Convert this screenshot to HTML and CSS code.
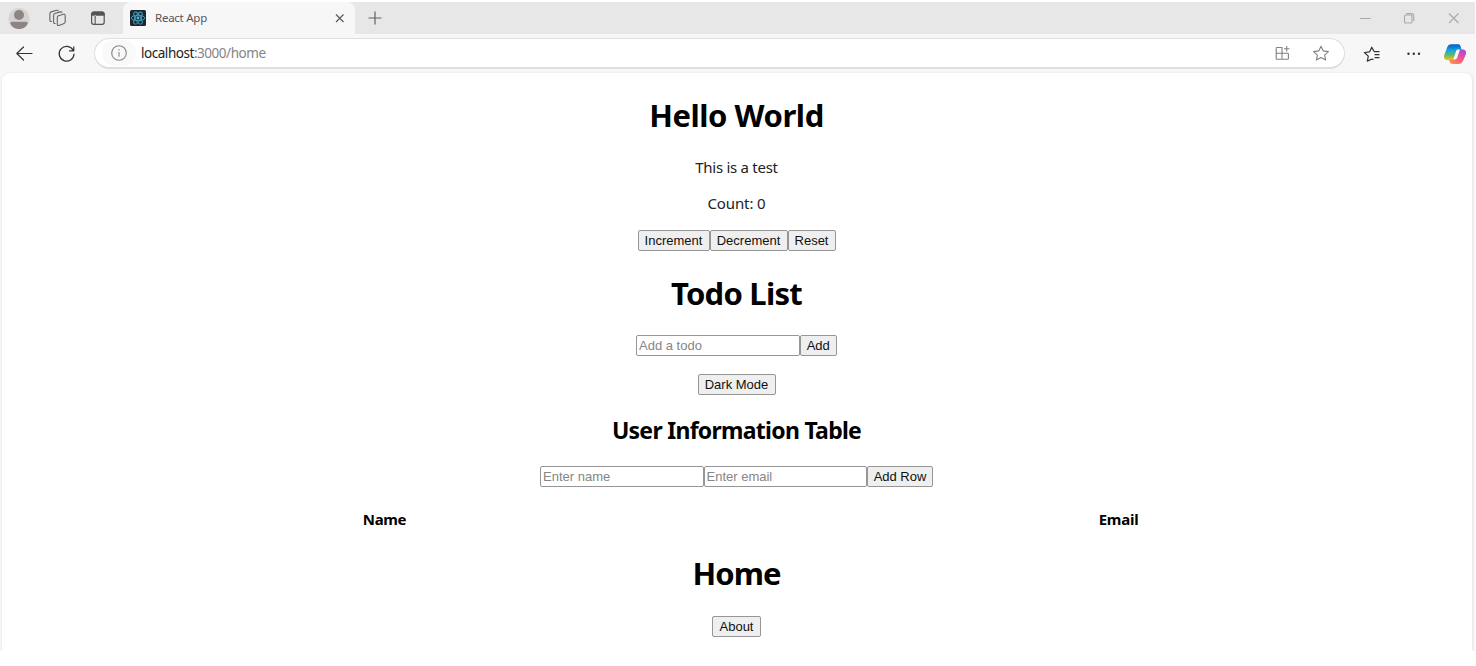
FILE: index.html
```html
<!DOCTYPE html>
<html lang="en">
<head>
<meta charset="utf-8">
<title>React App</title>
<link rel="stylesheet" href="styles.css">
</head>
<body>
<div class="window">
  <header class="tabstrip">
    <svg class="tools" width="123" height="32" viewBox="0 2 123 32" fill="none">
      <circle cx="19" cy="18.500" r="10.500" fill="#d5d2cf"/>
      <circle cx="19" cy="15" r="5" fill="#8b8683"/>
      <path d="M10.300 23.500q0-1.800 1.800-1.800h13.800q1.800 0 1.800 1.800c-1.300 3.400-4.500 5.500-8.700 5.500s-7.400-2.100-8.700-5.500z" fill="#8b8683"/>
      <g stroke="#666" stroke-width="1.100" stroke-linejoin="round" stroke-linecap="round">
        <path d="M58.400 15.700l5.100-1.500q1.700-.4 1.700 1.300v6.300q0 1.200-1.100 1.600l-5.100 2q-1.700.5-1.700-1.200v-6.600q0-1.500 1.100-1.900z"/>
        <path d="M55.200 23.500q-1.600.2-1.600-1.500v-6.600q0-1.500 1.300-1.900l5.400-1.600q1.200-.3 1.600.6"/>
        <path d="M51.600 21.500q-1.700.2-1.700-1.500v-6.200q0-1.500 1.300-1.900l5.400-1.600q1.200-.3 1.600.6"/>
      </g>
      <rect x="91.600" y="12.100" width="12.600" height="12.200" rx="2" stroke="#555" stroke-width="1.200"/>
      <path d="M91.500 14q0-2.500 2.500-2.500h8q2.500 0 2.500 2.500v1.700h-13zM94.600 15v9h1.100v-9z" fill="#555"/>
    </svg>
    <div class="tab">
      <svg width="16" height="16" viewBox="0 0 16 16" fill="none">
        <rect width="16" height="16" rx="1.500" fill="#20262e"/>
        <g stroke="#3fa6c5" stroke-width=".9"><ellipse cx="8" cy="8" rx="6.800" ry="2.700"/><ellipse cx="8" cy="8" rx="6.800" ry="2.700" transform="rotate(60 8 8)"/><ellipse cx="8" cy="8" rx="6.800" ry="2.700" transform="rotate(120 8 8)"/></g>
        <circle cx="8" cy="8" r="1.400" fill="#4fbcdd"/>
      </svg>
      <span class="tab-title">React App</span>
      <svg width="10" height="10" viewBox="0 0 10 10"><path d="M1 1.500l7.500 7.500M8.500 1.500l-7.500 7.500" stroke="#5c5c5c" stroke-width="1.200"/></svg>
    </div>
    <svg class="plus" width="14" height="14" viewBox="0 0 14 14"><path d="M7 .5v13M.5 7h13" stroke="#606060" stroke-width="1.200"/></svg>
    <svg class="controls" width="120" height="32" viewBox="1355 2 120 32" fill="none" stroke="#a9a9a9" stroke-width="1.100">
      <path d="M1360 18.500h10.500M1449 13.500l9.500 9.500M1458.500 13.500l-9.500 9.500"/>
      <rect x="1404.500" y="15" width="7.500" height="8" rx="1.300"/>
      <path d="M1406 13.600h5.500q2.200 0 2.200 2.200v5.200"/>
    </svg>
  </header>
  <nav class="toolbar">
    <svg class="nav-icons" width="94" height="39" viewBox="0 34 94 39" fill="none" stroke="#333" stroke-width="1.200" stroke-linecap="round" stroke-linejoin="round">
      <path d="M32 53.500H17M23.500 47l-6.700 6.500 6.700 6.500"/>
      <path d="M73 50a7.400 7.400 0 1 0 1 4M73.800 46.800v4h-4.300"/>
    </svg>
    <div class="address">
      <span class="info"><svg width="16" height="16" viewBox="0 0 16 16" fill="none" stroke="#858585" stroke-width="1.100"><circle cx="8" cy="8" r="7.300"/><path d="M8 7v4.800M8 4.100v1.400"/></svg></span>
      <span class="url"><b>localhost</b>:3000/home</span>
      <svg class="address-icons" width="64" height="28" viewBox="1270 40 64 28" fill="none" stroke="#808080" stroke-width="1.100" stroke-linejoin="round">
        <path d="M1282 54.300v-5.800h-5q-.8 0-.8.800v10.200q0 .8.800.8h10.600q.8 0 .8-.8v-4.400q0-.8-.8-.8h-11.400M1282 54.300v6M1286.700 47v5.500M1284 49.700h5.500"/>
        <path d="M1321 47.200l2.200 4.700 5.200.7-3.800 3.500 1 5-4.600-2.500-4.600 2.500 1-5-3.800-3.500 5.200-.7z"/>
      </svg>
    </div>
    <svg class="actions" width="130" height="39" viewBox="1345 34 130 39" fill="none">
      <defs>
        <linearGradient id="cool" x1="0" y1="0" x2="0" y2="1"><stop stop-color="#075bc5"/><stop offset=".4" stop-color="#16a9df"/><stop offset=".68" stop-color="#61ba68"/><stop offset="1" stop-color="#ffc400"/></linearGradient>
        <linearGradient id="warm" x1=".8" y1="0" x2=".2" y2="1"><stop stop-color="#a548e0"/><stop offset=".5" stop-color="#f0558e"/><stop offset="1" stop-color="#ff8e4b"/></linearGradient>
      </defs>
      <path d="M1373.500 59.800l-1.500-.8-4.700 2.100 1-5-3.900-3.600 5.200-.7 2.200-4.600 2.200 4.400M1374 51.700h5.500M1374.500 54.700h5M1374.500 57.700h5" stroke="#333" stroke-width="1.200" stroke-linejoin="round"/>
      <g fill="#333"><circle cx="1408.500" cy="53.800" r="1.200"/><circle cx="1413.800" cy="53.800" r="1.200"/><circle cx="1419" cy="53.800" r="1.200"/></g>
      <path d="M1451.500 44.300h7q1.500 0 2 1.600l1.200 4h-3.400q-1.400 0-1.900 1.600l-2.200 6.800q-.7 1.800-2.500 1.800h-3.500c-3.500 0-4.800-2-3.900-5.200l2.700-7.200q1.200-3.400 4.500-3.400z" fill="url(#cool)"/>
      <path d="M1458.500 63.900h-6.500q-1.700 0-2.200-1.800l-.8-2h2.200q1.900 0 2.500-1.800l2.600-7.500q.5-1.400 1.900-1.400h3.700c3.600 0 4.800 2 3.900 5.100l-2.800 6.500q-1.200 2.900-4.500 2.900z" fill="url(#warm)"/>
      <path d="M1453.600 58.300l2.600-7.500q.5-1.400 1.900-1.400h1.900l-2.600 7.900q-.8 2.200-2.700 2.200h-1.800z" fill="#f7f7f7"/>
    </svg>
  </nav>
  <main class="page">
    <h1 class="hello">Hello World</h1>
    <p class="intro">This is a test</p>
    <p>Count: 0</p>
    <div class="row counter"><button class="w72">Increment</button><button class="w78">Decrement</button><button class="w48">Reset</button></div>
    <h1 class="todo">Todo List</h1>
    <div class="row todo-form"><input placeholder="Add a todo"><button class="w38">Add</button></div>
    <div class="row theme"><button class="w78">Dark Mode</button></div>
    <h2>User Information Table</h2>
    <div class="row user-form"><input placeholder="Enter name"><input placeholder="Enter email"><button class="w66">Add Row</button></div>
    <div class="table-head"><span>Name</span><span class="email">Email</span></div>
    <h1 class="home">Home</h1>
    <div class="row about"><button class="w49">About</button></div>
  </main>
</div>
</body>
</html>
```
FILE: styles.css
```css
* { box-sizing: border-box; }
body { margin: 0; padding-top: 2px; height: 666px; background: #fff; overflow: hidden; font-family: "Noto Sans", "Open Sans", sans-serif; color: #000; }
svg { display: block; flex: none; }
.window { width: 1475px; height: 649px; background: #f7f7f7; }
.tabstrip { display: flex; align-items: center; height: 32px; background: #e7e7e7; }
.tab { display: flex; align-items: center; width: 232px; height: 32px; padding: 0 10px 0 7px; background: #f7f7f7; border-radius: 8px 8px 0 0; }
.tab-title { flex: 1; margin-left: 9px; padding-bottom: 2px; font-size: 11.5px; letter-spacing: -.25px; color: #555; }
.plus { margin-left: 13px; }
.controls { margin-left: auto; }
.toolbar { display: flex; align-items: center; height: 39px; }
.address { display: flex; align-items: center; width: 1251px; height: 31px; padding-left: 7px; border: 1px solid #dedede; border-bottom-width: 2px; border-radius: 16px; background: #fff; }
.info { display: flex; align-items: center; justify-content: center; width: 34px; height: 26px; border-radius: 13px; background: #f9f9f9; }
.url { margin-left: 5px; font-size: 13.5px; letter-spacing: -.46px; color: #858585; }
.url b { font-weight: 400; color: #222; }
.address-icons { margin-left: auto; margin-right: 10px; }
.page { width: 1471px; height: 578px; margin-left: 2px; padding-top: 20px; padding-right: 1px; border-radius: 8px 8px 0 0; background: #fff; border-right: 1px solid #ececec; box-shadow: 0 0 2px #ddd; text-align: center; clip-path: inset(-2px -2px 0 -2px); }
h1, h2, p { margin: 0; }
h1 { height: 44px; line-height: 44px; font-size: 31px; }
h2 { height: 32px; line-height: 32px; margin-top: 19px; font-size: 23px; letter-spacing: -.72px; }
p { height: 21px; line-height: 21px; margin-top: 15px; font-size: 15px; letter-spacing: -.1px; color: #222; }
.hello { letter-spacing: -.45px; }
.intro { margin-top: 20px; letter-spacing: -.28px; }
.row { display: flex; justify-content: center; height: 21px; }
.counter { margin-top: 16px; }
.todo { margin-top: 20px; letter-spacing: -.75px; }
.todo-form { margin-top: 20px; }
.theme { margin-top: 18px; }
.user-form { margin-top: 20px; }
.about { margin-top: 21px; }
.home { margin-top: 22px; letter-spacing: -.9px; }
button, input { height: 21px; margin: 0; font: 13px "Liberation Sans", Arial, sans-serif; border: 1px solid #969696; border-radius: 2px; }
button { padding: 0 0 1px; background: #efefef; color: #111; line-height: 17px; }
input { width: 163.500px; padding: 0 2px 1px; background: #fff; }
input::placeholder { color: #858585; }
.w72 { width: 72px; }
.w78 { width: 78px; }
.w48 { width: 48px; }
.w38 { width: 37.500px; }
.w66 { width: 66px; }
.w49 { width: 49px; }
.table-head { display: grid; grid-template-columns: 765px 703px; height: 20px; line-height: 20px; margin-top: 22px; font-size: 15px; font-weight: 700; letter-spacing: -.35px; }
.email { letter-spacing: -.25px; }
```
